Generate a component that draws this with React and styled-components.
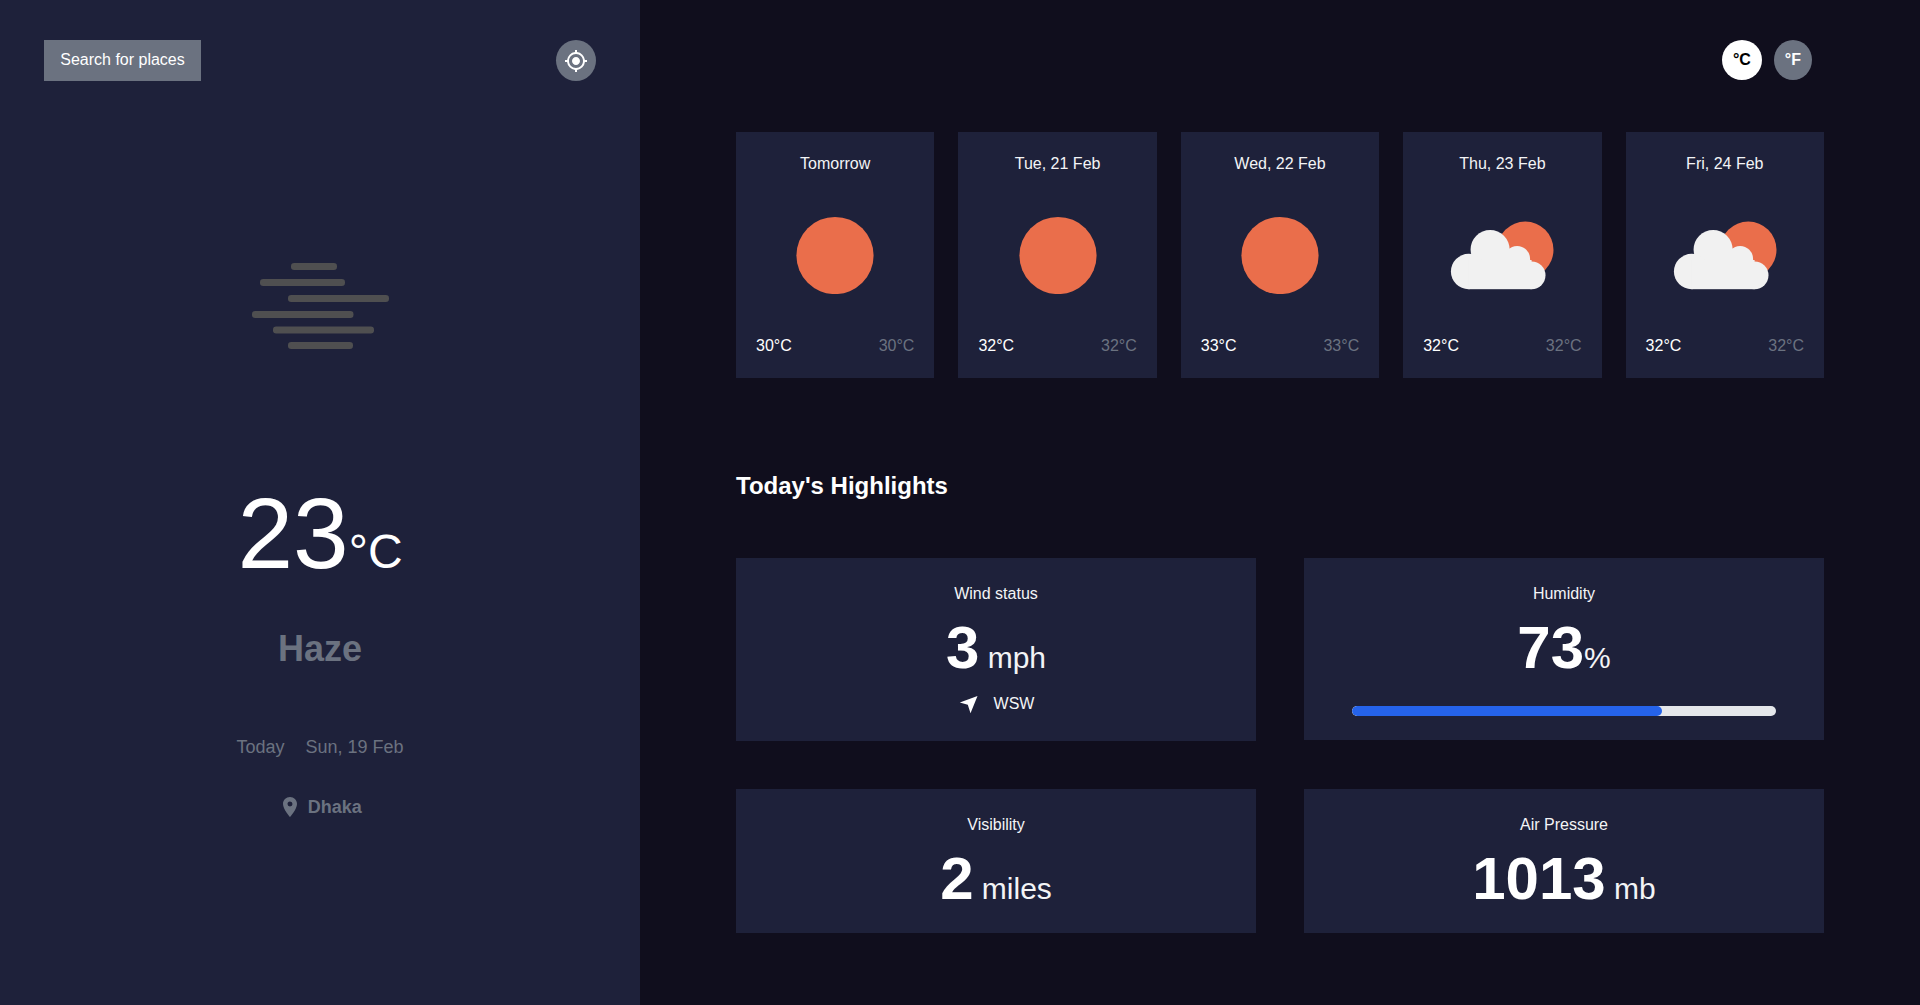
import React from "react";
import styled, { createGlobalStyle } from "styled-components";
import { MdMyLocation, MdLocationOn } from "react-icons/md";

const Global = createGlobalStyle`
  * { box-sizing: border-box; }
  html, body { margin: 0; padding: 0; background: #100e1d; overflow: hidden; }
  body { font-family: "Liberation Sans", Arial, sans-serif; font-size: 16px; line-height: 24px; color: #fff; }
`;

const Page = styled.div`
  display: flex;
  width: 1920px;
  height: 1005px;
  overflow: hidden;
`;

const Sidebar = styled.aside`
  flex: 0 0 640px;
  height: 100%;
  background: #1e213a;
  padding: 40px 44px 0;
  display: flex;
  flex-direction: column;
`;

const SideTop = styled.div`
  display: flex;
  justify-content: space-between;
  align-items: stretch;
  height: 41px;
`;

const SearchButton = styled.button`
  border: 0;
  padding: 0 16px 2px;
  background: #6b7280;
  color: #fff;
  font: inherit;
  width: 157px;
  white-space: nowrap;
`;

const LocateButton = styled.button`
  border: 0;
  padding: 0;
  width: 40px;
  border-radius: 50%;
  background: #6b7280;
  color: #fff;
  display: flex;
  align-items: center;
  justify-content: center;
  font-size: 24px;
`;

const HazeDrawing = styled.svg`
  display: block;
  align-self: center;
  margin: 182px 0 136px;
  flex: none;
  filter: blur(0.5px);
`;

const Temp = styled.div`
  text-align: center;
  font-size: 100px;
  line-height: 96px;
  white-space: nowrap;
`;

const TempUnit = styled.span`
  font-size: 48px;
  line-height: 48px;
`;

const Condition = styled.div`
  margin-top: 48px;
  text-align: center;
  font-size: 36px;
  line-height: 40px;
  font-weight: 700;
  color: #6b7280;
`;

const DateRow = styled.div`
  margin-top: 64px;
  display: flex;
  justify-content: center;
  gap: 21px;
  font-size: 18px;
  line-height: 28px;
  color: #6b7280;
`;

const Place = styled.div`
  margin-top: 32px;
  display: flex;
  justify-content: center;
  align-items: center;
  gap: 5.5px;
  font-size: 18px;
  line-height: 28px;
  font-weight: 700;
  color: #6b7280;
  svg { font-size: 24px; flex: none; }
`;

const Main = styled.main`
  flex: 1;
  height: 100%;
  padding: 40px 96px 0;
`;

const UnitToggle = styled.div`
  display: flex;
  justify-content: flex-end;
  gap: 12px;
  margin-right: 12px;
`;

const UnitButton = styled.button`
  border: 0;
  height: 40px;
  padding: 0 11px;
  border-radius: 50%;
  font: inherit;
  font-weight: 700;
  background: ${(p) => (p.$active ? "#fff" : "#6b7280")};
  color: ${(p) => (p.$active ? "#000" : "#fff")};
`;

const Forecast = styled.div`
  margin-top: 52px;
  display: grid;
  grid-template-columns: repeat(5, 1fr);
  gap: 24px;
`;

const DayCard = styled.div`
  height: 246px;
  padding: 20px;
  background: #1e213a;
  display: flex;
  flex-direction: column;
`;

const DayName = styled.div`
  text-align: center;
  color: #f3f4f6;
  white-space: nowrap;
`;

const DayIcon = styled.div`
  flex: 1;
  display: flex;
  align-items: center;
  justify-content: center;
`;

const DayTemps = styled.div`
  display: flex;
  justify-content: space-between;
`;

const LowTemp = styled.span`
  color: #6b7280;
`;

const Heading = styled.h2`
  margin: 92px 0 56px;
  font-size: 24px;
  line-height: 32px;
  font-weight: 700;
  color: #fff;
`;

const HighlightGrid = styled.div`
  display: grid;
  grid-template-columns: repeat(2, 1fr);
  gap: 48px;
  align-items: start;
`;

const HighlightCard = styled.div`
  padding: 24px 48px;
  background: #1e213a;
  text-align: center;
`;

const HighlightTitle = styled.div`
  color: #f3f4f6;
`;

const Value = styled.div`
  margin-top: 11px;
  font-size: 60px;
  line-height: 61px;
  font-weight: 700;
  white-space: nowrap;
`;

const ValueUnit = styled.span`
  font-size: 30px;
  line-height: 36px;
  font-weight: 400;
  color: #f3f4f6;
`;

const WindRow = styled.div`
  margin-top: 15px;
  height: 24px;
  display: flex;
  justify-content: center;
  align-items: center;
  gap: 12px;
  color: #f3f4f6;
`;

const WindLabel = styled.span`
  line-height: 22px;
  padding-bottom: 2px;
`;

const Track = styled.div`
  margin-top: 28px;
  height: 10px;
  border-radius: 5px;
  background: #e5e7eb;
  overflow: hidden;
`;

const Fill = styled.div`
  height: 100%;
  border-radius: 5px;
  background: #2563eb;
`;

const ORANGE = "#ea6e4b";

const Sun = () => (
  <svg width="78" height="78" viewBox="0 -0.5 78 78">
    <circle cx="39" cy="39" r="38.6" fill={ORANGE} />
  </svg>
);

const CloudSun = () => (
  <svg width="130" height="90" viewBox="-2.6 0 130 90">
    <circle cx="85.7" cy="39.7" r="28.2" fill={ORANGE} />
    <g fill="#f1f1f1">
      <circle cx="50.5" cy="39.5" r="19.5" />
      <circle cx="77.5" cy="49" r="13" />
      <circle cx="29" cy="61.5" r="17.7" />
      <circle cx="92" cy="65.3" r="13.9" />
      <rect x="29" y="50" width="63" height="29.2" />
    </g>
  </svg>
);

const hazeBars = [
  [39, 46, 0],
  [8, 85, 16],
  [36, 101, 32],
  [0, 101.5, 48],
  [21, 101, 63.5],
  [36, 65, 79],
];

const days = [
  ["Tomorrow", "30°C", false],
  ["Tue, 21 Feb", "32°C", false],
  ["Wed, 22 Feb", "33°C", false],
  ["Thu, 23 Feb", "32°C", true],
  ["Fri, 24 Feb", "32°C", true],
];

export default function App() {
  return (
    <Page>
      <Global />
      <Sidebar>
        <SideTop>
          <SearchButton>Search for places</SearchButton>
          <LocateButton aria-label="Use my location"><MdMyLocation /></LocateButton>
        </SideTop>
        <HazeDrawing width="137" height="86" viewBox="0 0 137 86">
          {hazeBars.map(([x, w, y]) => (
            <rect key={y} x={x} y={y} width={w} height="7" rx="3.2" fill="#4f4f50" />
          ))}
        </HazeDrawing>
        <Temp>23<TempUnit>°C</TempUnit></Temp>
        <Condition>Haze</Condition>
        <DateRow><span>Today</span><span>Sun, 19 Feb</span></DateRow>
        <Place><MdLocationOn /><span>Dhaka</span></Place>
      </Sidebar>
      <Main>
        <UnitToggle>
          <UnitButton $active>°C</UnitButton>
          <UnitButton>°F</UnitButton>
        </UnitToggle>
        <Forecast>
          {days.map(([name, temp, cloudy]) => (
            <DayCard key={name}>
              <DayName>{name}</DayName>
              <DayIcon>{cloudy ? <CloudSun /> : <Sun />}</DayIcon>
              <DayTemps><span>{temp}</span><LowTemp>{temp}</LowTemp></DayTemps>
            </DayCard>
          ))}
        </Forecast>
        <Heading>Today's Highlights</Heading>
        <HighlightGrid>
          <HighlightCard>
            <HighlightTitle>Wind status</HighlightTitle>
            <Value>3<ValueUnit> mph</ValueUnit></Value>
            <WindRow>
              <svg width="24" height="24" viewBox="0.7 0.7 24 24">
                <path d="M20.2 3.7 2.5 10.3 10.5 12.5 13.2 21Z" fill="#fff" />
              </svg>
              <WindLabel>WSW</WindLabel>
            </WindRow>
          </HighlightCard>
          <HighlightCard>
            <HighlightTitle>Humidity</HighlightTitle>
            <Value>73<ValueUnit>%</ValueUnit></Value>
            <Track><Fill style={{ width: "73%" }} /></Track>
          </HighlightCard>
          <HighlightCard>
            <HighlightTitle>Visibility</HighlightTitle>
            <Value>2<ValueUnit> miles</ValueUnit></Value>
          </HighlightCard>
          <HighlightCard>
            <HighlightTitle>Air Pressure</HighlightTitle>
            <Value>1013<ValueUnit> mb</ValueUnit></Value>
          </HighlightCard>
        </HighlightGrid>
      </Main>
    </Page>
  );
}
